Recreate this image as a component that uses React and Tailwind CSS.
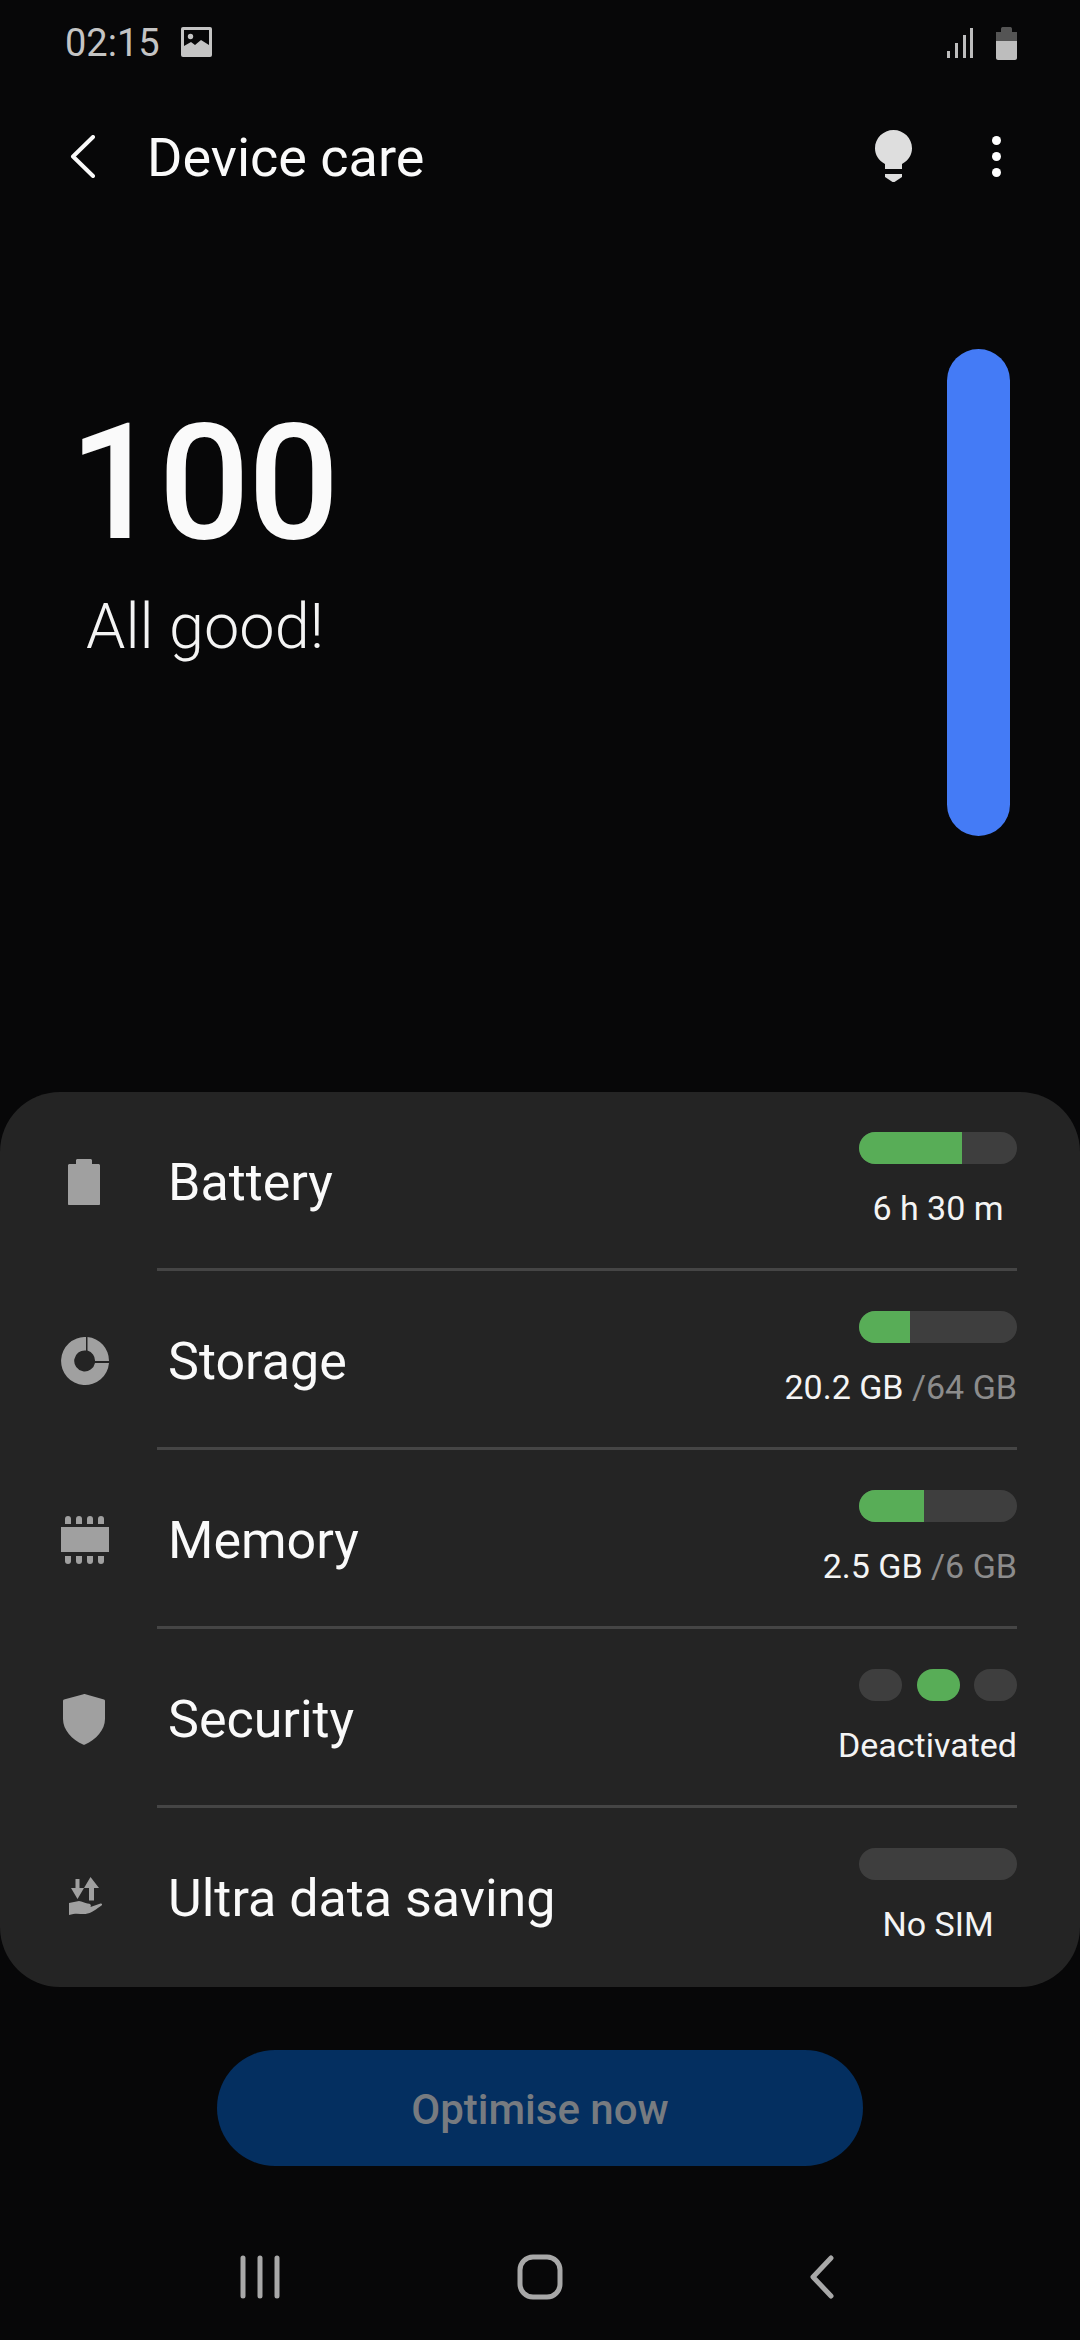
import React from 'react';

const rows = [
    { label: 'Battery', fill: 'w-[103px]', value: '6 h 30 m', centered: true, icon: BatteryIcon },
    { label: 'Storage', fill: 'w-[51px]', value: '20.2 GB', total: '/64 GB', icon: StorageIcon },
    { label: 'Memory', fill: 'w-[65px]', value: '2.5 GB', total: '/6 GB', icon: MemoryIcon },
    { label: 'Security', dots: true, value: 'Deactivated', icon: ShieldIcon },
    { label: 'Ultra data saving', fill: 'w-0', value: 'No SIM', centered: true, icon: DataIcon },
];

function BatteryIcon() {
    return (
        <svg width="48" height="48" viewBox="0 0 48 48" fill="#a0a0a0">
            <path d="M15 2.500C15 1.700 15.600 1 16.500 1h13c.9 0 1.500.7 1.500 1.500V6h6.500c.8 0 1.500.7 1.500 1.500V46c0 .6-.4 1-1 1H8c-.6 0-1-.4-1-1V7.500C7 6.700 7.700 6 8.500 6H15z" />
        </svg>
    );
}

function StorageIcon() {
    return (
        <svg width="48" height="48" viewBox="0 0 48 48" fill="#a0a0a0">
            <path d="M25 0A24 24 0 1 0 48 26H34A10.500 10.500 0 1 1 25 13.500Z" />
            <path d="M26.500 0A24 24 0 0 1 48 24H34A10.500 10.500 0 0 0 26.500 13.500Z" />
        </svg>
    );
}

function MemoryIcon() {
    return (
        <svg width="48" height="48" viewBox="0 0 48 48" fill="#a0a0a0">
            <rect x="0" y="11" width="48" height="25" />
            {[4, 15, 26, 37].map(x => (
                <g key={x}>
                    <path d={`M${x} 8V3a3 3 0 0 1 6 0v5z`} />
                    <path d={`M${x} 40h6v5a3 3 0 0 1-6 0z`} />
                </g>
            ))}
        </svg>
    );
}

function ShieldIcon() {
    return (
        <svg width="48" height="52" viewBox="0 0 48 52" fill="#a0a0a0">
            <path d="M22.500 1.200L3 6.500c-.6.200-1 .7-1 1.300V26c0 11 9 20.500 20 25.500.7.300 1.300.3 2 0C35 46.500 44 37 44 26V7.800c0-.6-.4-1.100-1-1.300L24.500 1.200c-.7-.2-1.300-.2-2 0z" />
        </svg>
    );
}

function DataIcon() {
    return (
        <svg width="48" height="48" viewBox="0 0 48 48" fill="#a0a0a0">
            <path d="M14.500 5h4v9h4.500l-6.500 11-6.500-11h4.500z" />
            <path d="M29.500 3l8.500 11h-5v12.500h-5V14h-5z" />
            <path d="M8 29l10-2c3 0 6 2.500 8.500 2.500 3 0 4 1.500 3 3.500l10-3.500c1.500-.5 2.200 1.200 1 2C36 34.500 30 39.500 24.500 40c-5 .4-9-1.500-16.500 1z" />
        </svg>
    );
}

function StatusBar() {
    return (
        <div className="h-[86px] pl-[65px] pr-[63px] flex items-center justify-between text-[#c4c4c4]">
            <div className="flex items-center gap-[21px]">
                <span className="text-[38px] leading-none">02:15</span>
                <svg width="31" height="30" viewBox="0 0 31 30" className="mb-[2px]">
                    <rect width="31" height="30" rx="2" fill="#c4c4c4" />
                    <rect x="3" y="3" width="25" height="18" fill="#070708" />
                    <circle cx="9.500" cy="9.500" r="2.700" fill="#c4c4c4" />
                    <path d="M3 23v-4l7-4 4 3 6-5 8 5v5z" fill="#c4c4c4" />
                </svg>
            </div>
            <div className="flex items-center gap-[22px]">
                <svg width="27" height="30" viewBox="0 0 27 30" fill="#bdbdbd" className="mt-[-1px]">
                    <rect x="0" y="23" width="3" height="7" />
                    <rect x="8" y="15" width="3" height="15" />
                    <rect x="16" y="7" width="3" height="23" />
                    <rect x="23" y="0" width="3" height="30" />
                </svg>
                <svg width="21" height="33" viewBox="0 0 21 33">
                    <path d="M5 2c0-1 .5-2 1.500-2h8c1 0 1.500 1 1.500 2v3h5v9H0V5h5z" fill="#545454" />
                    <path d="M0 14h21v17c0 1-1 2-2 2H2c-1 0-2-1-2-2z" fill="#bdbdbd" />
                </svg>
            </div>
        </div>
    );
}

function Header() {
    return (
        <div className="h-[138px] pt-[2px] pl-[70px] pr-[79px] flex items-center justify-between">
            <div className="flex items-center gap-[52px]">
                <svg width="25" height="43" viewBox="0 0 25 43" fill="none" stroke="#fafafa" strokeWidth="4" strokeLinecap="round" strokeLinejoin="round">
                    <path d="M23 2L3 21.500 23 41" />
                </svg>
                <span className="pt-[4px] text-[54px] leading-none text-[#fafafa]">Device care</span>
            </div>
            <div className="flex items-center gap-[80px]">
                <svg width="37" height="52" viewBox="0 0 37 52" fill="#dedede">
                    <path d="M18.500 0C8.300 0 0 8.200 0 18.300c0 6.500 3.500 12.300 10 15.700V39h17v-5c6.500-3.400 10-9.200 10-15.700C37 8.200 28.700 0 18.500 0z" />
                    <path d="M10 44h17v3l-7.500 5h-2L10 47z" />
                </svg>
                <div className="flex flex-col gap-[7px]">
                    <div className="w-[9px] h-[9px] rounded-full bg-white" />
                    <div className="w-[9px] h-[9px] rounded-full bg-white" />
                    <div className="w-[9px] h-[9px] rounded-full bg-white" />
                </div>
            </div>
        </div>
    );
}

function Hero() {
    return (
        <div className="h-[868px] pl-[69px] pr-[70px] flex justify-between">
            <div className="pt-[179px]">
                <div className="text-[161px] leading-none font-medium tracking-[-2px] text-[#fafafa]">100</div>
                <div className="text-[63px] leading-none font-light text-[#f4f4f4] mt-[31px] ml-[17px]">All good!</div>
            </div>
            <div className="mt-[125px] w-[63px] h-[487px] rounded-full bg-[#447bf6]" />
        </div>
    );
}

function Row({ row, last }) {
    const Icon = row.icon;
    return (
        <div className="flex h-[179px]">
            <div className="w-[61px] shrink-0" />
            <div className="w-[48px] shrink-0 flex items-center justify-center">
                <Icon />
            </div>
            <div className="w-[48px] shrink-0" />
            <div className={`flex-1 mr-[63px] flex justify-between border-b-[3px] ${last ? 'border-transparent' : 'border-[#454545]'}`}>
                <span className="self-center pt-[6px] ml-[11px] text-[52px] leading-none text-[#fafafa]">{row.label}</span>
                <div className={`pt-[40px] flex flex-col w-[158px] ${row.centered ? 'items-center' : 'items-end'}`}>
                    {row.dots ? (
                        <div className="w-full flex justify-between">
                            <div className="w-[43px] h-[32px] rounded-full bg-[#3e3e3e]" />
                            <div className="w-[43px] h-[32px] rounded-full bg-[#58ad57]" />
                            <div className="w-[43px] h-[32px] rounded-full bg-[#3e3e3e]" />
                        </div>
                    ) : (
                        <div className="w-full h-[32px] rounded-full bg-[#3e3e3e] overflow-hidden">
                            <div className={`h-full bg-[#58ad57] ${row.fill}`} />
                        </div>
                    )}
                    <div className="mt-[24px] text-[34px] leading-[40px] whitespace-nowrap text-[#f4f4f4]">
                        {row.value}
                        {row.total && <span className="text-[#8c8c8c]"> {row.total}</span>}
                    </div>
                </div>
            </div>
        </div>
    );
}

export default function App() {
    return (
        <div className="w-[1080px] h-[2340px] bg-[#070708] font-['Roboto',sans-serif] overflow-hidden flex flex-col">
            <StatusBar />
            <Header />
            <Hero />
            {/* Care list */}
            <div className="h-[895px] shrink-0 bg-[#242424] rounded-[60px]">
                {rows.map((row, i) => (
                    <Row key={row.label} row={row} last={i === rows.length - 1} />
                ))}
            </div>
            <div className="pt-[63px] flex justify-center">
                <div className="w-[646px] h-[116px] pt-[3px] rounded-full bg-[#042f60] flex items-center justify-center text-[42px] font-medium text-[#777b80]">
                    Optimise now
                </div>
            </div>
            {/* Nav bar */}
            <div className="mt-[88px] h-[46px] pl-[240px] flex items-center">
                <svg width="40" height="44" viewBox="0 0 40 44" stroke="#a8a8a8" strokeWidth="5" strokeLinecap="round">
                    <path d="M3 3v38M20 3v38M37 3v38" />
                </svg>
                <svg width="46" height="46" viewBox="0 0 46 46" fill="none" stroke="#a8a8a8" strokeWidth="5" className="ml-[237px]">
                    <rect x="3" y="3" width="40" height="40" rx="13" />
                </svg>
                <svg width="25" height="44" viewBox="0 0 25 44" fill="none" stroke="#a8a8a8" strokeWidth="5" strokeLinecap="round" strokeLinejoin="round" className="ml-[246px]">
                    <path d="M22 3L4 22l18 19" />
                </svg>
            </div>
        </div>
    );
}
